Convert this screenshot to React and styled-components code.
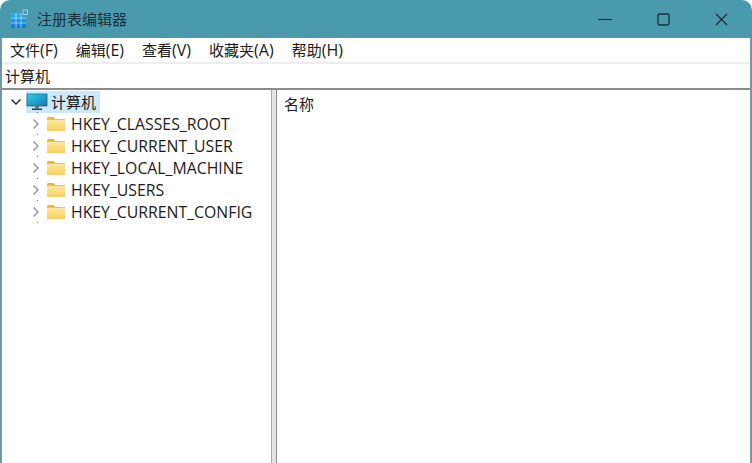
import React from 'react';
import styled, { createGlobalStyle } from 'styled-components';

const Global = createGlobalStyle`
  html, body { margin: 0; padding: 0; background: #fff; }
  #root { width: 752px; height: 463px; overflow: hidden; }
`;
const UI = `"Open Sans", "Noto Sans CJK SC", sans-serif`;

const Page = styled.div`
  width: 752px; height: 463px; display: flex; flex-direction: column;
  background: #fff; font-family: ${UI}; color: #1a1a1a; font-size: 15px; line-height: 20px;
`;
const Window = styled.div`
  flex: 1; display: flex; flex-direction: column; min-height: 0;
  background: #fff; border-left: 2px solid #6d9aa6; border-right: 2px solid #6d9aa6;
`;
const TitleBar = styled.div`
  height: 38px; flex: none; display: flex; align-items: center;
  background: #4a9aae; border-radius: 10px 10px 0 0; padding-left: 10px;
`;
const Title = styled.div`
  font-size: 15px; color: #17303a; margin-left: 7px; flex: 1; margin-top: -1px;
`;
const Controls = styled.div`display: flex; margin-right: 2px;`;
const Control = styled.div`
  width: 58px; height: 38px; display: flex; align-items: center; justify-content: center;
`;
const Menu = styled.div`
  height: 24px; flex: none; display: flex; align-items: center; gap: 18px; padding-left: 8px;
  border-bottom: 2px solid #eeeeee; background: #fff;
`;
const MenuItem = styled.span`color: #1a1a1a; white-space: nowrap;`;
const Accel = styled.span`font-size: 16px;`;
const Address = styled.div`
  height: 24px; flex: none; display: flex; align-items: center; padding-left: 3px;
  border-bottom: 2px solid #8c8c8c;
`;
const Split = styled.div`flex: 1; display: flex; min-height: 0;`;
const Tree = styled.div`width: 269px; flex: none; padding: 1px 0 0 6px; box-sizing: border-box;`;
const Splitter = styled.div`
  width: 6px; flex: none; background: #e4e4e4; box-sizing: border-box;
  border-left: 1px solid #a8a8a8; border-right: 1px solid #8c8c8c;
`;
const List = styled.div`flex: 1; padding: 4px 0 0 7px;`;
const Row = styled.div`
  position: relative; height: 22px; display: flex; align-items: center;
  padding-left: ${p => p.$indent || 0}px;
  &::after {
    content: ''; position: absolute; left: 29px; bottom: 0; width: 1px; height: 1px;
    background: #7a7a7a;
  }
`;
const Chevron = styled.span`width: 16px; height: 16px; display: flex; align-items: center; justify-content: center; flex: none;`;
const RootLabel = styled.span`
  display: flex; align-items: center; background: #cce8ff; height: 22px; padding-right: 4px;
  margin-left: 2px;
`;
const RootText = styled.span`margin-left: 3px;`;
const KeyText = styled.span`margin-left: 5px; color: #1c1c1c; font-size: 15.8px;`;
const FolderSlot = styled.span`display: flex; margin-left: 2px;`;

const AppIcon = () => (
  <svg width="20" height="20" viewBox="0 0 20 20">
    <defs>
      <linearGradient id="cell" x1="0" y1="0" x2="0" y2="1">
        <stop offset="0" stopColor="#25b4f2" />
        <stop offset="1" stopColor="#0a78d8" />
      </linearGradient>
    </defs>
    <path d="M1 4 H11 V9 H16 V19 H1 Z" fill="url(#cell)" />
    <path d="M6 4 V19 M11 4 V19 M1 9 H16 M1 14 H16" stroke="#bfe6f5" strokeWidth="0.7" />
    <rect x="13" y="1" width="4.5" height="4.5" fill="#4a9aae" stroke="#8fd4ee" strokeWidth="1" />
  </svg>
);
const Computer = () => (
  <svg width="22" height="18" viewBox="0 0 22 18">
    <defs>
      <linearGradient id="scr" x1="0" y1="0" x2="1" y2="1">
        <stop offset="0" stopColor="#35cdec" />
        <stop offset="1" stopColor="#0a80b4" />
      </linearGradient>
    </defs>
    <rect x="1" y="1" width="20" height="12" fill="url(#scr)" stroke="#1f5568" strokeWidth="0.7" />
    <rect x="9" y="13" width="4" height="2.5" fill="#5d7a86" />
    <rect x="6" y="15.5" width="10" height="1.5" fill="#263f4b" />
  </svg>
);
const Folder = () => (
  <svg width="20" height="16" viewBox="0 0 20 16">
    <defs>
      <linearGradient id="fld" x1="0" y1="0" x2="0" y2="1">
        <stop offset="0" stopColor="#fde79a" />
        <stop offset="1" stopColor="#fbcf5c" />
      </linearGradient>
    </defs>
    <path d="M1 2.5 Q1 1 2.5 1 H7.5 L9.5 3 H19 V15 H1 Z" fill="#eeb52e" />
    <rect x="1" y="4.5" width="18" height="10.5" fill="url(#fld)" />
    <rect x="1" y="3.8" width="18" height="0.8" fill="#fff6d8" />
  </svg>
);
const Down = () => (
  <svg width="12" height="12" viewBox="0 0 12 12"><path d="M1.5 3.5 L6 8 L10.5 3.5" fill="none" stroke="#222" strokeWidth="1.4" /></svg>
);
const Right = () => (
  <svg width="12" height="12" viewBox="0 0 12 12"><path d="M3.5 1.5 L8 6 L3.5 10.5" fill="none" stroke="#8a8a8a" strokeWidth="1.3" /></svg>
);

const keys = ['HKEY_CLASSES_ROOT', 'HKEY_CURRENT_USER', 'HKEY_LOCAL_MACHINE', 'HKEY_USERS', 'HKEY_CURRENT_CONFIG'];
const menus = [['文件', '(F)'], ['编辑', '(E)'], ['查看', '(V)'], ['收藏夹', '(A)'], ['帮助', '(H)']];

export default function App() {
  return (
    <Page>
      <Global />
      <TitleBar>
        <AppIcon />
        <Title>注册表编辑器</Title>
        <Controls>
          <Control>
            <svg width="14" height="12" viewBox="0 0 14 12"><path d="M0 6.5 H14" stroke="#17303a" strokeWidth="1.2" /></svg>
          </Control>
          <Control>
            <svg width="13" height="13" viewBox="0 0 13 13"><rect x="1" y="1" width="11" height="11" rx="1.5" fill="none" stroke="#17303a" strokeWidth="1.3" /></svg>
          </Control>
          <Control>
            <svg width="13" height="13" viewBox="0 0 13 13"><path d="M1 1 L12 12 M12 1 L1 12" stroke="#17303a" strokeWidth="1.2" /></svg>
          </Control>
        </Controls>
      </TitleBar>
      <Window>
        <Menu>{menus.map(([label, key]) => <MenuItem key={label}>{label}<Accel>{key}</Accel></MenuItem>)}</Menu>
        <Address>计算机</Address>
        <Split>
          <Tree>
            <Row>
              <Chevron><Down /></Chevron>
              <RootLabel><Computer /><RootText>计算机</RootText></RootLabel>
            </Row>
            {keys.map(k => (
              <Row key={k} $indent={20}>
                <Chevron><Right /></Chevron>
                <FolderSlot><Folder /></FolderSlot>
                <KeyText>{k}</KeyText>
              </Row>
            ))}
          </Tree>
          <Splitter />
          <List>名称</List>
        </Split>
      </Window>
    </Page>
  );
}
